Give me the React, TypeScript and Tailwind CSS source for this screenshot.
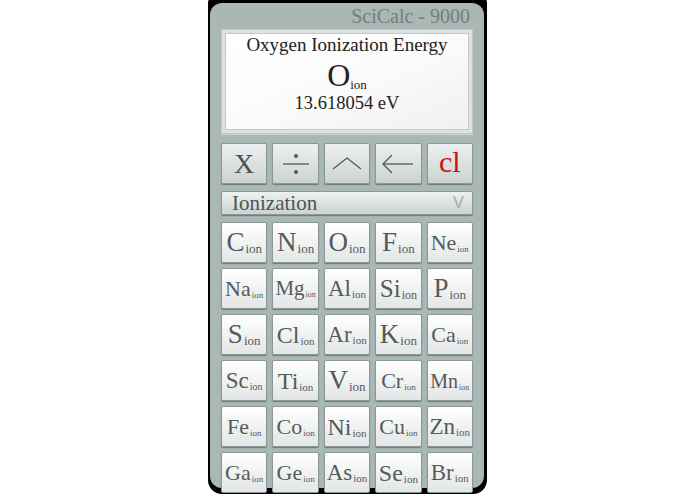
import React from "react";

type El = { s: string; m: number; sub: number };

const els: El[] = [
  { s: "C", m: 27, sub: 13 },
  { s: "N", m: 27, sub: 13 },
  { s: "O", m: 27, sub: 13 },
  { s: "F", m: 27, sub: 13 },
  { s: "Ne", m: 22, sub: 9 },
  { s: "Na", m: 22, sub: 9 },
  { s: "Mg", m: 21, sub: 8 },
  { s: "Al", m: 23, sub: 11 },
  { s: "Si", m: 25, sub: 12 },
  { s: "P", m: 27, sub: 13 },
  { s: "S", m: 27, sub: 13 },
  { s: "Cl", m: 24, sub: 11 },
  { s: "Ar", m: 23, sub: 11 },
  { s: "K", m: 27, sub: 13 },
  { s: "Ca", m: 22, sub: 9 },
  { s: "Sc", m: 23, sub: 10 },
  { s: "Ti", m: 24, sub: 11 },
  { s: "V", m: 27, sub: 13 },
  { s: "Cr", m: 22, sub: 9 },
  { s: "Mn", m: 20, sub: 8 },
  { s: "Fe", m: 22, sub: 9 },
  { s: "Co", m: 22, sub: 9 },
  { s: "Ni", m: 24, sub: 11 },
  { s: "Cu", m: 22, sub: 9 },
  { s: "Zn", m: 23, sub: 11 },
  { s: "Ga", m: 22, sub: 9 },
  { s: "Ge", m: 22, sub: 9 },
  { s: "As", m: 23, sub: 11 },
  { s: "Se", m: 24, sub: 11 },
  { s: "Br", m: 23, sub: 11 },
];

function TopBtn({ children }: { children: React.ReactNode }) {
  return (
    <div className="h-[41px] rounded-[2px] border border-[#8c9897] bg-gradient-to-b from-[#edf0f0] to-[#cbd3d2] shadow-[0_1px_1px_rgba(0,0,0,0.35)] flex items-center justify-center">
      {children}
    </div>
  );
}

export default function App() {
  return (
    <div className="w-full h-[494px] bg-white flex justify-center overflow-hidden">
      <div className="w-[279px] h-[504px] -mt-[10px] bg-black rounded-[14px] pl-[2px] pr-[3px] pt-[13px] pb-[6px] shrink-0">
        <div className="h-full bg-[#a9b7b5] rounded-[12px] px-[11px] font-['Liberation_Serif','DejaVu_Serif',serif]">
          <div className="h-[26px] flex items-end justify-end pr-[3px] text-[20px] leading-none text-[#767e7d] pb-[3px]">
            SciCalc - 9000
          </div>
          <div className="h-[105px] border border-[#bfc6c5] bg-[#dde1e1] p-[3px] shadow-[0_1px_0_rgba(255,255,255,0.4)]">
            <div className="h-full bg-gradient-to-br from-white via-[#fbfbfb] to-[#f0f0f0] border border-[#c4c9c9] flex flex-col items-center text-[#222]">
              <div className="text-[19px] leading-none mt-[1px]">Oxygen Ionization Energy</div>
              <div className="mt-[5px] leading-none flex items-baseline">
                <span className="text-[32px] leading-none">O</span>
                <span className="text-[13px] leading-none translate-y-[3px]">ion</span>
              </div>
              <div className="text-[18.5px] leading-none mt-[3px]">13.618054 eV</div>
            </div>
          </div>
          <div className="grid grid-cols-5 gap-[5px] mt-[9px]">
            <TopBtn>
              <span className="text-[28px] leading-none text-[#4a4f4f]">X</span>
            </TopBtn>
            <TopBtn>
              <svg width="30" height="24" viewBox="0 0 30 24">
                <line x1="2" y1="12" x2="28" y2="12" stroke="#555" strokeWidth="1.3" />
                <circle cx="15" cy="4" r="2" fill="#555" />
                <circle cx="15" cy="20" r="2" fill="#555" />
              </svg>
            </TopBtn>
            <TopBtn>
              <svg width="32" height="22" viewBox="0 0 32 22">
                <polyline points="2,16 16,5 30,16" fill="none" stroke="#555" strokeWidth="1.3" />
              </svg>
            </TopBtn>
            <TopBtn>
              <svg width="34" height="22" viewBox="0 0 34 22">
                <line x1="2" y1="11" x2="32" y2="11" stroke="#555" strokeWidth="1.3" />
                <polyline points="11,2 2,11 11,20" fill="none" stroke="#555" strokeWidth="1.3" />
              </svg>
            </TopBtn>
            <TopBtn>
              <span className="text-[30px] leading-none text-[#d01414] -mt-[4px]">cl</span>
            </TopBtn>
          </div>
          <div className="mt-[7px] h-[24px] rounded-[2px] border border-[#8c9897] bg-gradient-to-b from-[#eef1f1] to-[#cbd3d2] shadow-[0_1px_1px_rgba(0,0,0,0.35)] flex items-center justify-between pl-[10px] pr-[8px]">
            <span className="text-[21px] leading-none text-[#4f5454]">Ionization</span>
            <span className="font-['DejaVu_Sans',sans-serif] text-[16px] leading-none text-[#a9afae]">V</span>
          </div>
          <div className="grid grid-cols-5 gap-[5px] mt-[7px]">
            {els.map((e) => (
              <div
                key={e.s}
                className="h-[41px] rounded-[2px] border border-[#8c9897] bg-gradient-to-b from-white to-[#e3e6e6] shadow-[0_1px_1px_rgba(0,0,0,0.35)] flex items-center justify-center text-[#555a5a]"
              >
                <span className="flex items-baseline leading-none">
                  <span className="leading-none" style={{ fontSize: e.m }}>{e.s}</span>
                  <span className="leading-none translate-y-[2px] ml-[1px]" style={{ fontSize: e.sub }}>ion</span>
                </span>
              </div>
            ))}
          </div>
        </div>
      </div>
    </div>
  );
}
